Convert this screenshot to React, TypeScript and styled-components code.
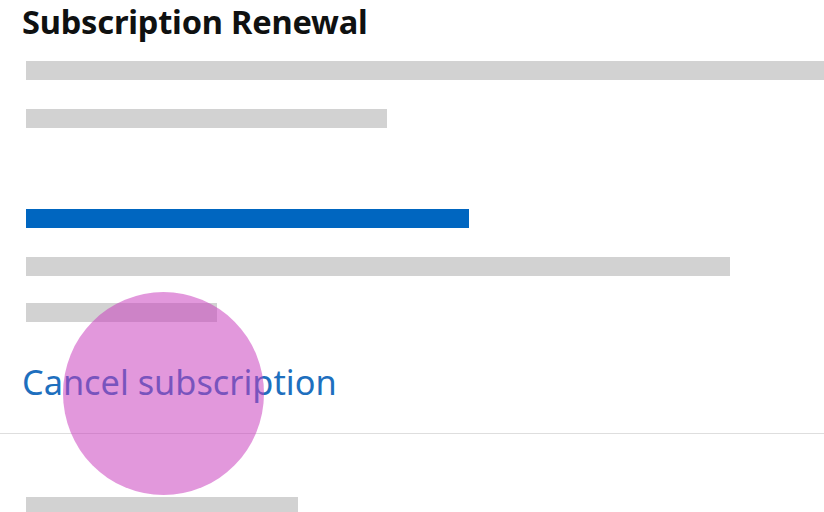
import React from 'react';
import styled, { createGlobalStyle } from 'styled-components';

const GlobalStyle = createGlobalStyle`
  html, body {
    margin: 0;
    padding: 0;
    background: #ffffff;
    overflow: hidden;
  }
  body {
    font-family: 'Noto Sans', 'Open Sans', Arial, sans-serif;
  }
`;

const Page = styled.div`
  position: relative;
  width: 824px;
  height: 512px;
  overflow: hidden;
  background: #ffffff;
`;

const Section = styled.section`
  display: flex;
  flex-direction: column;
  padding: 0 0 0 22px;
`;

const Title = styled.h2`
  margin: 0;
  height: 48px;
  font-size: 32.6px;
  line-height: 44px;
  font-weight: 700;
  color: #0f1111;
  letter-spacing: -0.2px;
`;

const Bar = styled.div<{ $width: number; $top: number; $blue?: boolean }>`
  margin: ${(p) => p.$top}px 0 0 4px;
  width: ${(p) => p.$width}px;
  height: 19px;
  flex-shrink: 0;
  background: ${(p) => (p.$blue ? '#0066c0' : '#d2d2d2')};
`;

const CancelLink = styled.a`
  margin-top: 38px;
  font-size: 34.3px;
  line-height: 44px;
  color: #1e6fbe;
  text-decoration: none;
  cursor: pointer;
`;

const Divider = styled.hr`
  margin: 29px 0 0 0;
  border: none;
  border-top: 1px solid #dedede;
  height: 0;
`;

const TouchMark = styled.div`
  position: absolute;
  left: 63px;
  top: 292px;
  width: 201px;
  height: 203px;
  border-radius: 50%;
  background: rgba(200, 60, 189, 0.53);
  pointer-events: none;
`;

const App = (): JSX.Element => (
  <Page>
    <GlobalStyle />
    <Section>
      <Title>Subscription Renewal</Title>
      <Bar $width={820} $top={13} />
      <Bar $width={361} $top={29} />
      <Bar $width={443} $top={81} $blue />
      <Bar $width={704} $top={29} />
      <Bar $width={191} $top={27} />
      <CancelLink>Cancel subscription</CancelLink>
    </Section>
    <Divider />
    <Section>
      <Bar $width={272} $top={63} />
    </Section>
    <TouchMark />
  </Page>
);

export default App;
